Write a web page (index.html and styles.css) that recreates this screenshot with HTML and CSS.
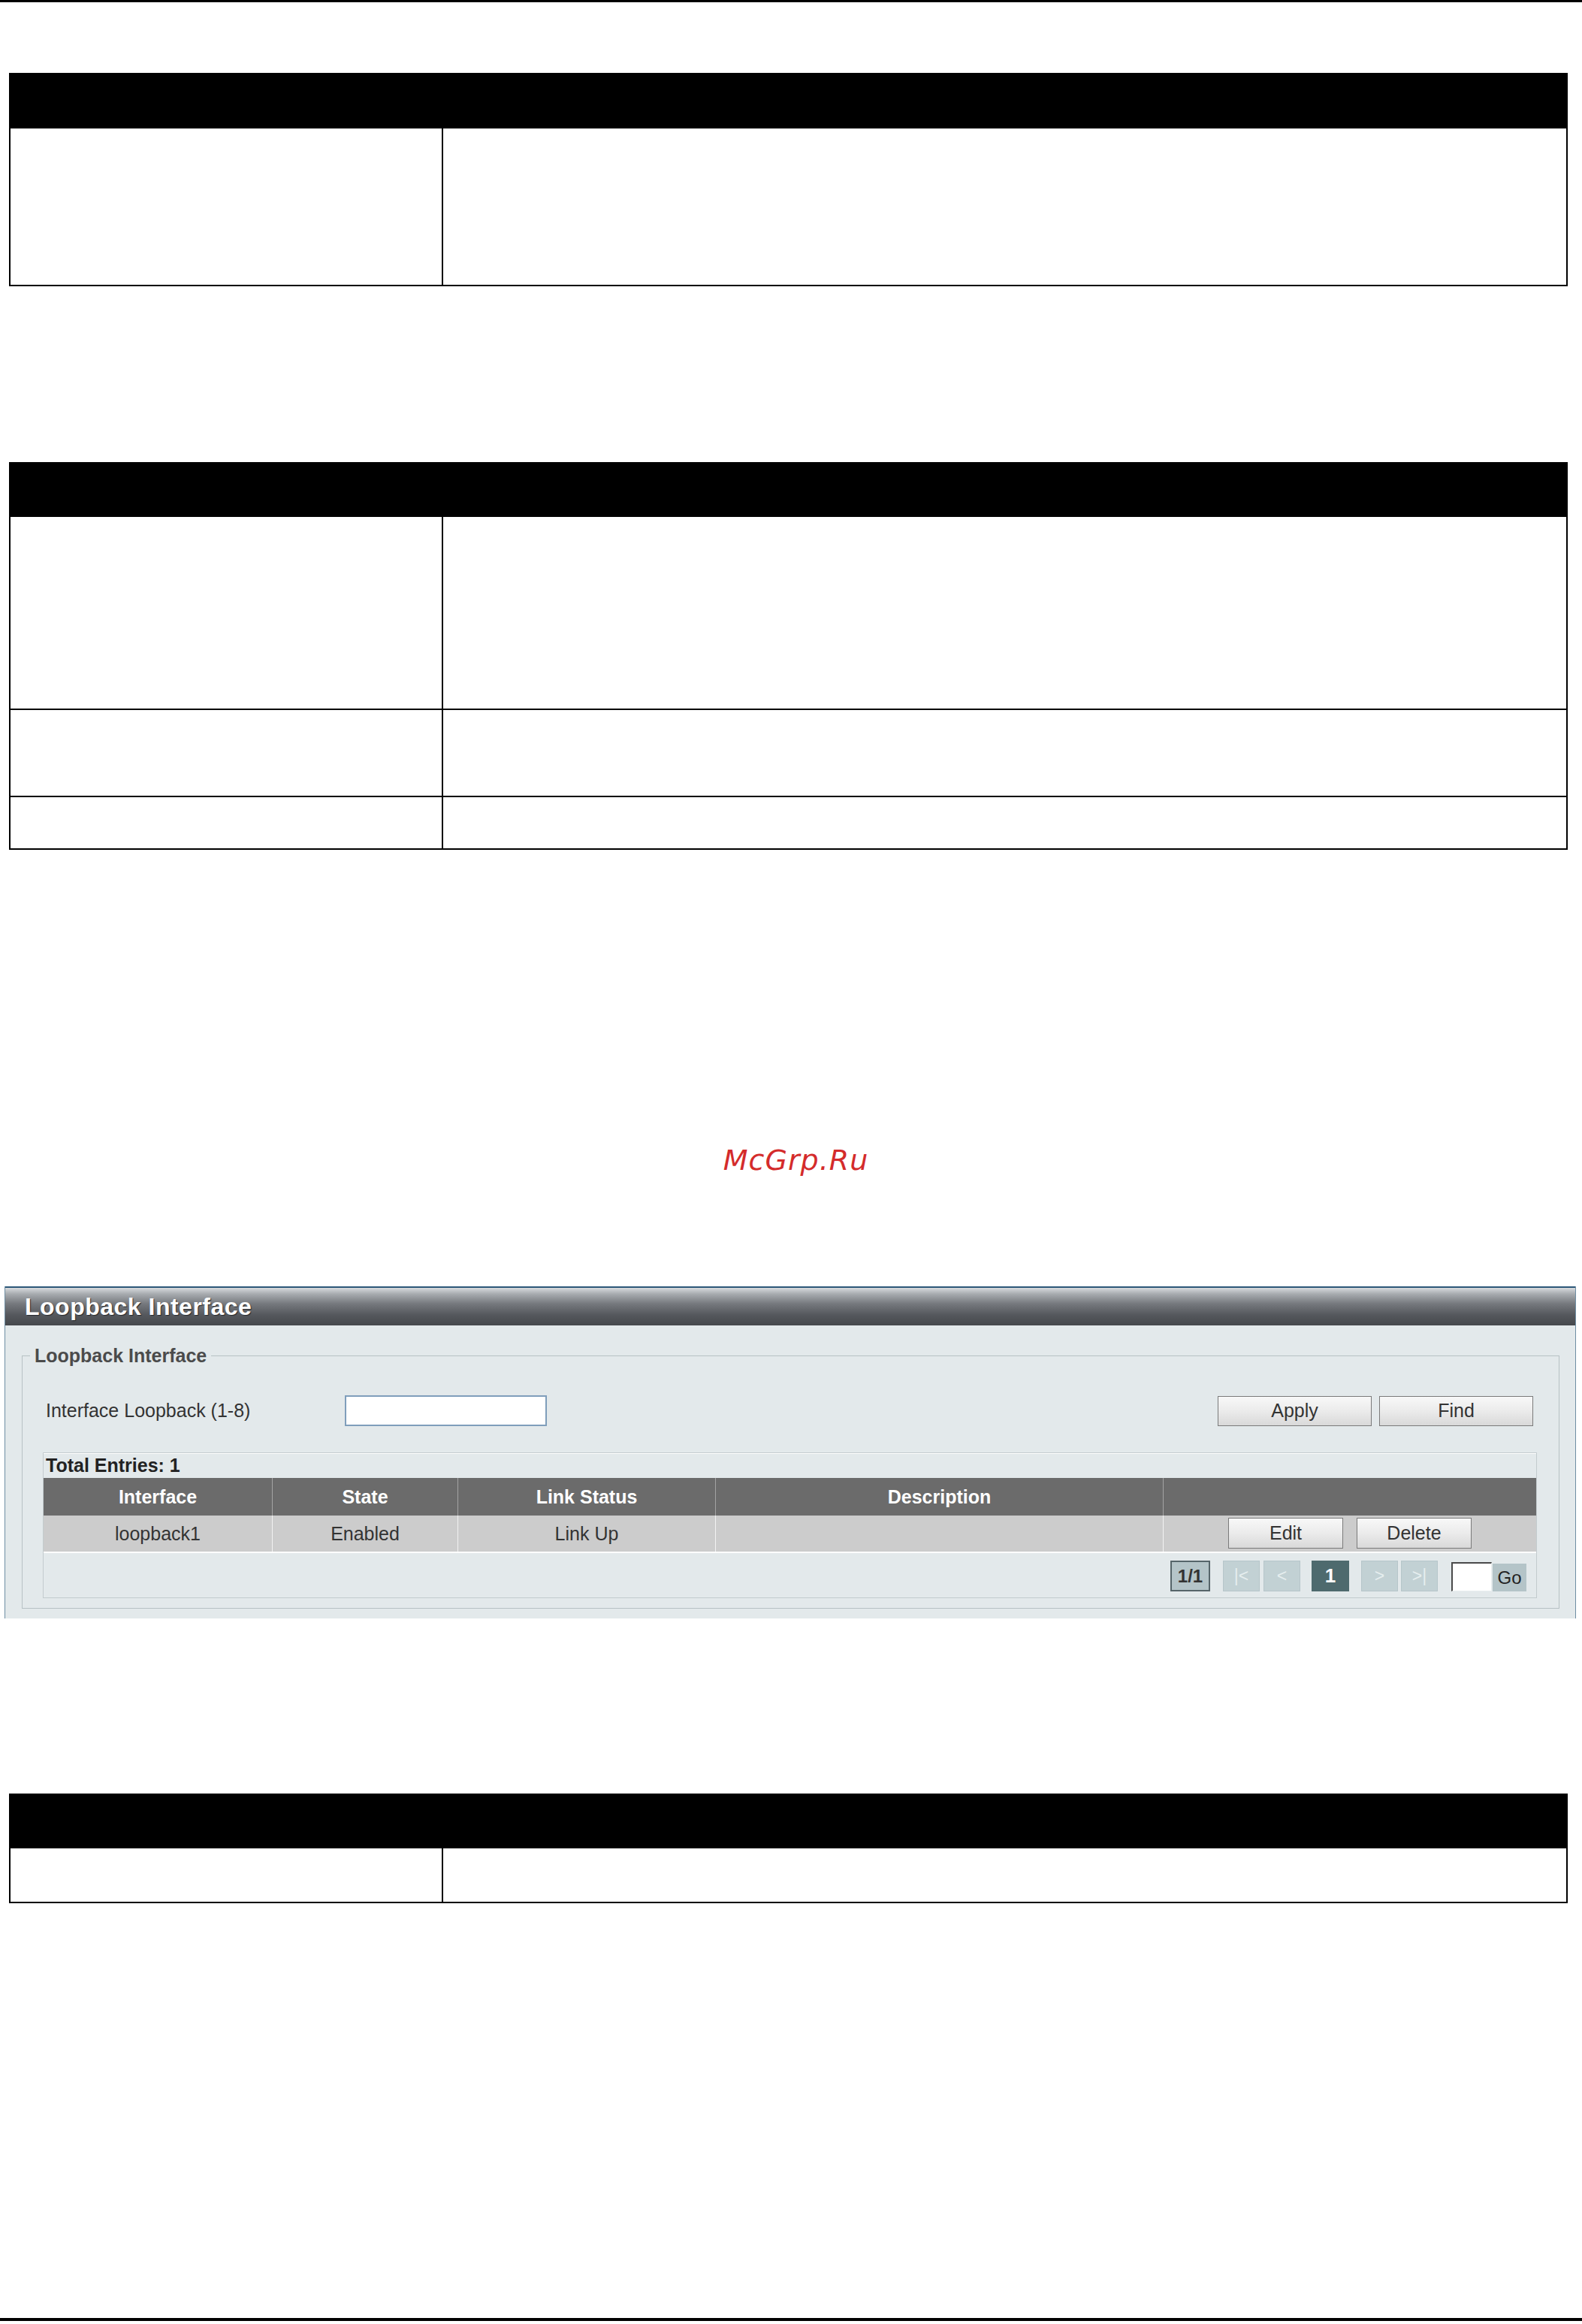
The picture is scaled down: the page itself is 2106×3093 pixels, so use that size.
FILE: index.html
```html
<!DOCTYPE html>
<html lang="en">
<head>
<meta charset="utf-8">
<title>Loopback Interface</title>
<link rel="stylesheet" href="styles.css">
</head>
<body>
<div class="page">
  <div class="rule-top"></div>

  <section class="spec spec-1">
    <div class="spec-head"></div>
    <div class="spec-row h208"><div class="c1"></div><div class="c2"></div></div>
  </section>

  <section class="spec spec-2">
    <div class="spec-head h71"></div>
    <div class="spec-row h255"><div class="c1"></div><div class="c2"></div></div>
    <div class="spec-row h116"><div class="c1"></div><div class="c2"></div></div>
    <div class="spec-row h70"><div class="c1"></div><div class="c2"></div></div>
  </section>

  <div class="watermark">McGrp.Ru</div>

  <section class="panel">
    <div class="panel-title">Loopback Interface</div>
    <div class="panel-body">
      <fieldset class="fs">
        <legend class="fs-legend">Loopback Interface</legend>
        <div class="fs-inner">
          <div class="form-row">
            <label class="lbl" for="lb">Interface Loopback (1-8)</label>
            <input class="txt" id="lb" type="text">
            <div class="spacer"></div>
            <div class="btns">
              <button class="btn btn-wide">Apply</button>
              <button class="btn btn-wide">Find</button>
            </div>
          </div>

          <div class="tbox">
            <div class="total">Total Entries: 1</div>
            <div class="grid grid-head">
              <div class="cell">Interface</div>
              <div class="cell">State</div>
              <div class="cell">Link Status</div>
              <div class="cell">Description</div>
              <div class="cell"></div>
            </div>
            <div class="grid grid-row">
              <div class="cell">loopback1</div>
              <div class="cell">Enabled</div>
              <div class="cell">Link Up</div>
              <div class="cell"></div>
              <div class="cell actions">
                <button class="btn btn-sm">Edit</button>
                <button class="btn btn-sm">Delete</button>
              </div>
            </div>
            <div class="pager">
              <span class="pg pg-count">1/1</span>
              <span class="pg pg-nav m17">|&lt;</span>
              <span class="pg pg-nav m5">&lt;</span>
              <span class="pg pg-cur m15">1</span>
              <span class="pg pg-nav m16">&gt;</span>
              <span class="pg pg-nav m4">&gt;|</span>
              <input class="pg-input m18" type="text">
              <span class="pg pg-go m1">Go</span>
            </div>
          </div>
        </div>
      </fieldset>
    </div>
  </section>

  <section class="spec spec-3">
    <div class="spec-head h71"></div>
    <div class="spec-row h71"><div class="c1"></div><div class="c2"></div></div>
  </section>

  <div class="rule-bottom"></div>
</div>
</body>
</html>
```

FILE: styles.css
```css
* { box-sizing: border-box; }

html, body {
  margin: 0;
  padding: 0;
  background: #ffffff;
}

body {
  font-family: "Liberation Sans", Arial, sans-serif;
  color: #333;
}

.page {
  width: 2106px;
}

.rule-top {
  height: 3px;
  background: #000;
}

.rule-bottom {
  height: 4px;
  background: #000;
  margin-top: 552px;
}

/* ---------- black header spec tables ---------- */
.spec {
  margin: 0 19px 0 12px;
  border: 2px solid #000;
}
.spec-1 { margin-top: 94px; }
.spec-2 { margin-top: 234px; }
.spec-3 { margin-top: 233px; }

.spec-head {
  height: 72px;
  background: #000;
}
.spec-head.h71 { height: 71px; }

.spec-row {
  display: grid;
  grid-template-columns: 574px 1fr;
}
.spec-row + .spec-row { border-top: 2px solid #000; }
.spec-row .c2 { border-left: 2px solid #000; }

.h208 { height: 208px; }
.h255 { height: 255px; }
.h116 { height: 116px; }
.h70  { height: 70px; }
.h71  { height: 71px; }

/* ---------- watermark ---------- */
.watermark {
  margin-top: 391px;
  padding-left: 13px;
  text-align: center;
  font-family: "DejaVu Sans", "Liberation Sans", sans-serif;
  font-style: oblique;
  font-size: 38px;
  line-height: 44px;
  letter-spacing: 1px;
  color: #d42b2b;
}

/* ---------- screenshot panel ---------- */
.panel {
  margin-top: 146px;
  margin-left: 6px;
  width: 2092px;
  background: #e3e9eb;
  border-left: 1px solid #6f8ea3;
  border-right: 1px solid #6f8ea3;
}

.panel-title {
  height: 52px;
  border-top: 2px solid #2b5778;
  background: linear-gradient(to bottom, #d8dbde 0%, #a8acb0 16%, #76797e 42%, #55585d 72%, #45484c 100%);
  display: flex;
  align-items: center;
  padding-left: 26px;
  font-weight: bold;
  font-size: 32px;
  letter-spacing: 0.5px;
  color: #fff;
  text-shadow: 1px 1px 1px #26292c;
}

.panel-body {
  padding: 25px 21px 13px 22px;
}

.fs {
  margin: 0;
  padding: 0 29px 13px 0;
  border: 1px solid #b7c1c4;
  min-width: 0;
}

.fs-legend {
  margin-left: 10px;
  padding: 0 6px;
  font-weight: bold;
  font-size: 25px;
  line-height: 30px;
  color: #4b4b4b;
}

.fs-inner {
  margin-left: 27px;
}

.form-row {
  margin-top: 38px;
  height: 41px;
  display: flex;
  align-items: center;
}

.lbl {
  width: 402px;
  padding-left: 4px;
  font-size: 25px;
  color: #333;
}

.txt {
  width: 269px;
  height: 41px;
  margin: 0;
  border: 2px solid #7f9ebb;
  background: #fff;
}

.spacer { flex: 1; }

.btns {
  display: flex;
  gap: 10px;
  margin-right: 5px;
}

.btn {
  margin: 0;
  padding: 0;
  font-family: "Liberation Sans", Arial, sans-serif;
  font-size: 25px;
  color: #333;
  background: linear-gradient(to bottom, #f8f8f8 0%, #ebebeb 50%, #d9d9d9 100%);
  border: 1px solid #7a7a7a;
}

.btn-wide {
  width: 205px;
  height: 40px;
}

.btn-sm {
  width: 153px;
  height: 41px;
}

/* ---------- inner listing table ---------- */
.tbox {
  margin-top: 35px;
  border: 1px solid #c3cbce;
  box-shadow: inset 0 1px 0 #ffffff;
}

.total {
  height: 33px;
  display: flex;
  align-items: center;
  padding-left: 3px;
  font-weight: bold;
  font-size: 25px;
  color: #222;
}

.grid {
  display: grid;
  grid-template-columns: 304px 247px 343px 596px 497px;
}

.grid-head {
  height: 50px;
  background: #6b6b6b;
  color: #fff;
  font-weight: bold;
  font-size: 25px;
}

.grid-row {
  height: 50px;
  background: #cccccc;
  border-bottom: 2px solid #ffffff;
  font-size: 25px;
  color: #333;
}

.cell {
  display: flex;
  align-items: center;
  justify-content: center;
}
.grid-head .cell + .cell { border-left: 1px solid #a3a3a3; }
.grid-row .cell + .cell { border-left: 1px solid #f2f2f2; }

.actions {
  gap: 18px;
  padding-bottom: 2px;
}

.pager {
  height: 59px;
  display: flex;
  justify-content: flex-end;
  align-items: flex-end;
  padding: 0 13px 8px 0;
}

.pg {
  display: flex;
  align-items: center;
  justify-content: center;
  height: 41px;
  font-size: 23px;
}

.pg-count {
  width: 53px;
  background: #b4c4c8;
  border: 2px solid #56656a;
  font-weight: bold;
  font-size: 24px;
  color: #333;
}

.pg-nav {
  width: 49px;
  background: #c2d1d4;
  border: 1px solid #b6c6ca;
  color: #e6eeef;
}

.pg-cur {
  width: 50px;
  background: #4e6a6e;
  color: #fff;
  font-weight: bold;
  font-size: 26px;
}

.pg-input {
  width: 54px;
  height: 39px;
  margin-top: 0;
  margin-bottom: 0;
  padding: 0;
  background: #fff;
  border: 1px solid #e8eeef;
  border-top: 2px solid #4a4a4a;
  border-left: 2px solid #4a4a4a;
}

.pg-go {
  width: 45px;
  height: 37px;
  background: #b4c4c8;
  color: #222;
  font-size: 24px;
}

.m1  { margin-left: 1px; }
.m4  { margin-left: 4px; }
.m5  { margin-left: 5px; }
.m15 { margin-left: 15px; }
.m16 { margin-left: 16px; }
.m17 { margin-left: 17px; }
.m18 { margin-left: 18px; }
```
